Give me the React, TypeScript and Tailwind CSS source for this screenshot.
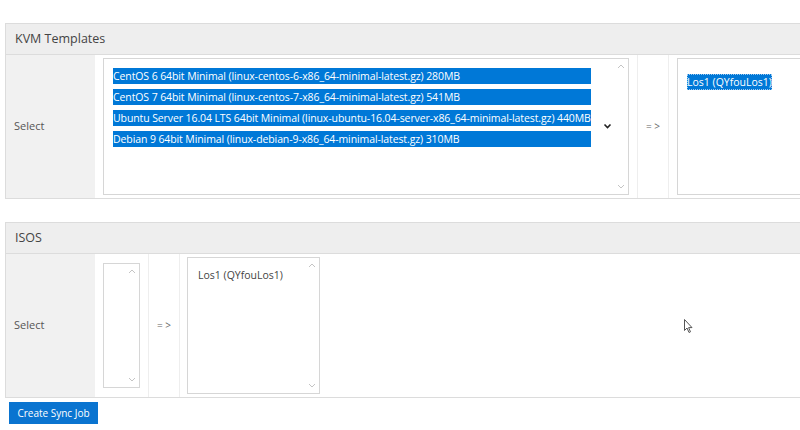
import React from 'react'

const font = { fontFamily: '"Open Sans", "Noto Sans", sans-serif' }

const templates = [
  'CentOS 6 64bit Minimal (linux-centos-6-x86_64-minimal-latest.gz) 280MB',
  'CentOS 7 64bit Minimal (linux-centos-7-x86_64-minimal-latest.gz) 541MB',
  'Ubuntu Server 16.04 LTS 64bit Minimal (linux-ubuntu-16.04-server-x86_64-minimal-latest.gz) 440MB',
  'Debian 9 64bit Minimal (linux-debian-9-x86_64-minimal-latest.gz) 310MB',
]

function ScrollArrows() {
  return (
    <div className="absolute right-[3px] top-[4px] bottom-[4px] flex flex-col justify-between text-[#c4c4c4]">
      <svg width="8" height="6" viewBox="0 0 8 6">
        <path d="M1 5 L4 2 L7 5" fill="none" stroke="currentColor" strokeWidth="1" />
      </svg>
      <svg width="8" height="6" viewBox="0 0 8 6">
        <path d="M1 1 L4 4 L7 1" fill="none" stroke="currentColor" strokeWidth="1" />
      </svg>
    </div>
  )
}

function Panel({ title, children }: { title: string; children: React.ReactNode }) {
  return (
    <div className="ml-[5px] w-[830px] border border-[#dcdcdc]">
      <div className="h-[31px] flex items-center px-[9px] bg-[#eeeeee] border-b border-[#dcdcdc] text-[12.5px] text-[#444]">
        {title}
      </div>
      <div className="flex h-[143px]">
        <div className="w-[89px] shrink-0 flex items-center px-[8px] bg-[#f1f1f1] text-[11px] text-[#555]">
          Select
        </div>
        {children}
      </div>
    </div>
  )
}

function Arrow() {
  return (
    <div className="w-[31px] shrink-0 flex items-center justify-center border-r border-[#eeeeee] text-[10px] text-[#666]">
      = &gt;
    </div>
  )
}

export default function App() {
  return (
    <div className="relative w-[800px] h-[430px] overflow-hidden bg-white" style={font}>
      <div className="pt-[23px]">
        <Panel title="KVM Templates">
          <div className="shrink-0 px-[8px] py-[3px] border-r border-[#eeeeee]">
            <div className="relative w-[526px] h-[137px] border border-[#d6d6d6] pt-[9px] pl-[9px] flex items-start gap-[12px]">
              <div className="inline-flex flex-col gap-[5px]">
                {templates.map((t) => (
                  <div key={t} className="h-[16px] leading-[16px] bg-[#0078d7] text-white text-[10.5px] whitespace-nowrap tracking-[-0.1px]">
                    {t}
                  </div>
                ))}
              </div>
              <svg className="mt-[55px]" width="9" height="6" viewBox="0 0 9 6">
                <path d="M1.5 1.5 L4.5 4.5 L7.5 1.5" fill="none" stroke="#222" strokeWidth="1.6" />
              </svg>
              <ScrollArrows />
            </div>
          </div>
          <Arrow />
          <div className="shrink-0 px-[8px] py-[3px]">
            <div className="relative w-[160px] h-[137px] border border-[#d6d6d6] pt-[9px] pl-[9px]">
              <span className="inline-block h-[16px] leading-[16px] bg-[#0078d7] text-white text-[10.5px] outline outline-1 outline-dotted outline-[#9cc8ef] -outline-offset-1">
                Los1 (QYfouLos1)
              </span>
            </div>
          </div>
        </Panel>

        <div className="h-[23px]" />

        <Panel title="ISOS">
          <div className="shrink-0 px-[8px] py-[9px] border-r border-[#eeeeee]">
            <div className="relative w-[37px] h-[125px] border border-[#d6d6d6]">
              <ScrollArrows />
            </div>
          </div>
          <Arrow />
          <div className="shrink-0 px-[7px] py-[3px]">
            <div className="relative w-[133px] h-[137px] border border-[#d6d6d6] pt-[10px] pl-[10px] text-[10.5px] text-[#444]">
              Los1 (QYfouLos1)
              <ScrollArrows />
            </div>
          </div>
        </Panel>

        <button className="mt-[4px] ml-[9px] w-[89px] h-[22px] bg-[#0a74d0] text-white text-[10px] flex items-center justify-center">
          Create Sync Job
        </button>
      </div>

      <svg className="absolute left-[684px] top-[319px]" width="10" height="15" viewBox="0 0 10 15">
        <path d="M0.5 0.5 L0.5 11.5 L3 9 L5 13.5 L6.5 12.8 L4.6 8.6 L8 8.6 Z" fill="#fff" stroke="#555" strokeWidth="1" />
      </svg>
    </div>
  )
}
